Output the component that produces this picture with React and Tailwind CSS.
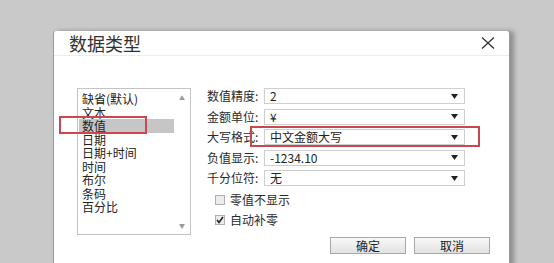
import React from "react";

const font = { fontFamily: '"Noto Sans CJK SC", "Noto Sans", sans-serif' };

function Arrow() {
  return (
    <svg width="7" height="5" viewBox="0 0 7 5" className="shrink-0">
      <path d="M0 0 L7 0 L3.5 5 Z" fill="#222" />
    </svg>
  );
}

function Select({ value, highlight }) {
  return (
    <div className="relative w-[201px] h-[16px]">
      <div className="flex items-center justify-between h-full border border-[#cfcfcf] bg-white pl-[5px] pr-[6px] text-[12px] text-[#222] leading-none">
        <span>{value}</span>
        <Arrow />
      </div>
      {highlight && (
        <div className="absolute left-[-14px] right-[-15px] top-[-3px] bottom-[-2px] border-2 border-[#c9474f]" />
      )}
    </div>
  );
}

function Row({ label, value, highlight }) {
  return (
    <div className="flex items-center h-[16px]">
      <span className="w-[57px] text-[12px] text-[#2a2a2a] leading-none whitespace-nowrap">{label}</span>
      <Select value={value} highlight={highlight} />
    </div>
  );
}

function Check({ checked, label }) {
  return (
    <div className="flex items-center h-[14px] pl-[8px]">
      <div className="w-[10px] h-[10px] border border-[#b0b0b0] bg-[#ececec] flex items-center justify-center">
        {checked && (
          <svg width="8" height="8" viewBox="0 0 8 8">
            <path d="M1 4 L3 6.5 L7 1" stroke="#222" strokeWidth="1.6" fill="none" />
          </svg>
        )}
      </div>
      <span className="ml-[5px] text-[12px] text-[#2a2a2a] leading-none">{label}</span>
    </div>
  );
}

const items = ["缺省(默认)", "文本", "数值", "日期", "日期+时间", "时间", "布尔", "条码", "百分比"];

export default function App() {
  return (
    <div className="w-[554px] h-[263px] bg-[#c9c9c9] overflow-hidden pt-[31px] pl-[53px]" style={font}>
      <div className="w-[457px] h-[240px] bg-white rounded-tl-[3px] rounded-tr-[3px] border-l border-r border-[#9a9a9a] shadow-[4px_0_5px_rgba(0,0,0,0.3)]">
        <div className="h-[25px] flex items-center justify-between pl-[15px] pr-[14px] border-b border-[#ececec]">
          <span className="text-[18px] text-[#333] leading-none">数据类型</span>
          <svg width="14" height="12" viewBox="0 0 14 12">
            <path d="M1 0.5 L13 11.5 M13 0.5 L1 11.5" stroke="#333" strokeWidth="1.3" />
          </svg>
        </div>
        <div className="flex pt-[32px] pl-[23px]">
          <div className="relative w-[114px] h-[147px] border border-[#c4c4c4] pt-[3px] pl-[1px]">
            {items.map((t, i) => (
              <div
                key={t}
                className={`relative h-[13.5px] w-[95px] pl-[3px] text-[12px] leading-[13.5px] text-[#222] ${i === 2 ? "bg-[#c6c6c6]" : ""}`}
              >
                {t}
                {i === 2 && (
                  <div className="absolute left-[-20px] top-[-3px] w-[88px] h-[18px] border-2 border-[#c9474f]" />
                )}
              </div>
            ))}
            <div className="absolute right-[5px] top-[6px] text-[6px] text-[#999] leading-none">▲</div>
            <div className="absolute right-[5px] bottom-[5px] text-[6px] text-[#999] leading-none">▼</div>
          </div>
          <div className="ml-[16px] flex flex-col">
            <div className="flex flex-col gap-[4.5px]">
              <Row label="数值精度:" value="2" />
              <Row label="金额单位:" value="¥" />
              <Row label="大写格式:" value="中文金额大写" highlight />
              <Row label="负值显示:" value="-1234.10" />
              <Row label="千分位符:" value="无" />
            </div>
            <div className="flex flex-col gap-[6px] mt-[7px]">
              <Check label="零值不显示" />
              <Check checked label="自动补零" />
            </div>
            <div className="flex gap-[8px] mt-[10px] ml-[123px]">
              <button className="w-[76px] h-[17px] border border-[#a8a8a8] bg-gradient-to-b from-[#f8f8f8] to-[#e2e2e2] text-[12px] leading-none text-[#222]">确定</button>
              <button className="w-[76px] h-[17px] border border-[#a8a8a8] bg-gradient-to-b from-[#f8f8f8] to-[#e2e2e2] text-[12px] leading-none text-[#222]">取消</button>
            </div>
          </div>
        </div>
      </div>
    </div>
  );
}
